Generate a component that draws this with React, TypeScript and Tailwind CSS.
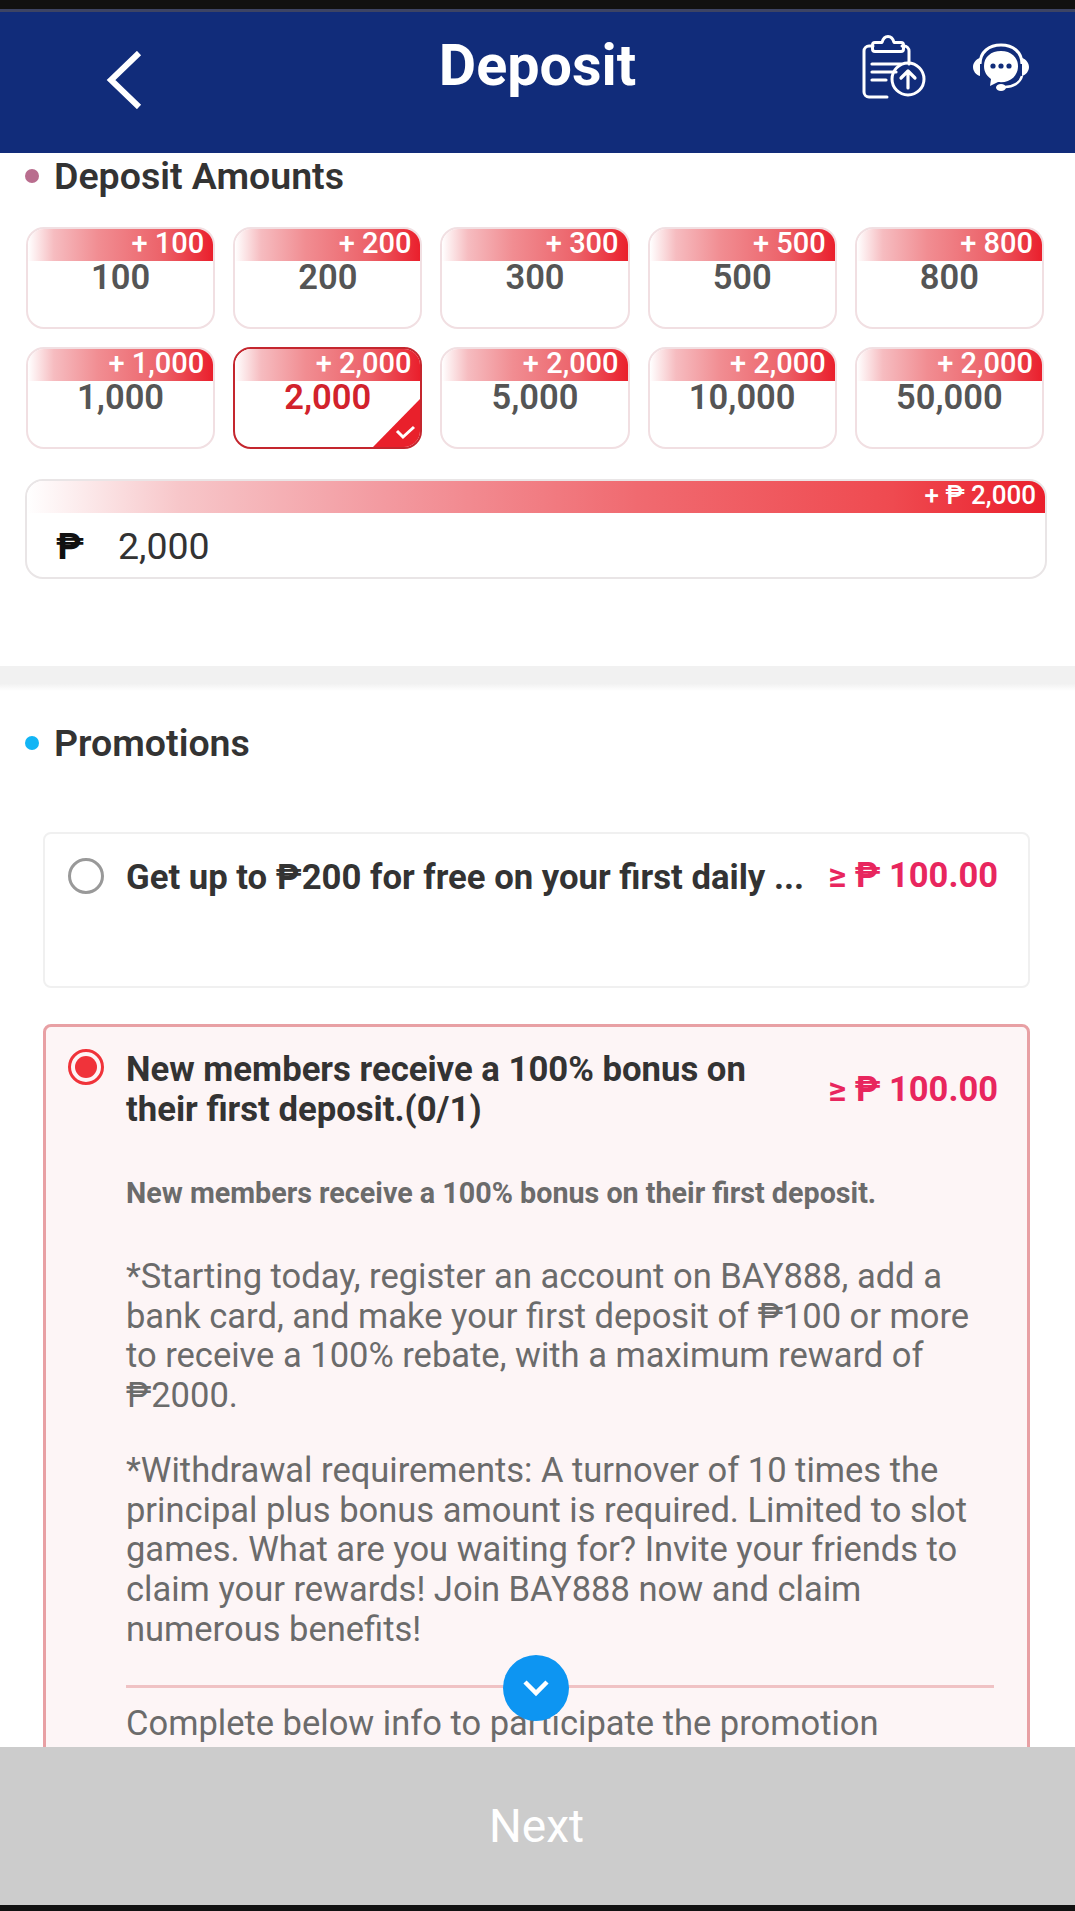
const STRIP = "bg-[linear-gradient(90deg,#ffffff_0%,#f6bcc0_14%,#f18d92_38%,#ec636a_72%,#ea1f2c_100%)]";
const WIDE_STRIP = "bg-[linear-gradient(90deg,#ffffff_0%,#f7c6c9_15%,#f39aa0_35%,#f06a70_60%,#ef4a50_85%,#ea1f2c_100%)]";

const AMOUNTS: [string, string][] = [
  ["100", "+ 100"], ["200", "+ 200"], ["300", "+ 300"], ["500", "+ 500"], ["800", "+ 800"],
  ["1,000", "+ 1,000"], ["2,000", "+ 2,000"], ["5,000", "+ 2,000"], ["10,000", "+ 2,000"], ["50,000", "+ 2,000"],
];

function ClipboardIcon() {
  return (
    <svg width="70" height="66" viewBox="0 0 70 66" fill="none" stroke="#fff" strokeWidth="3" strokeLinecap="round" strokeLinejoin="round">
      <path d="M15 12h-4a5 5 0 0 0-5 5v41a5 5 0 0 0 5 5h18" />
      <path d="M44 12h2a5 5 0 0 1 5 5v13" />
      <path d="M17 8.500h7c1-4 3-6 6-6s5 2 6 6h7c1.500 0 2.500 1 2.500 2.500v4c0 1.500-1 2.500-2.500 2.500h-26c-1.500 0-2.500-1-2.500-2.500v-4c0-1.500 1-2.500 2.500-2.500z" />
      <path d="M14 30h29M14 38h24M14 46h14" strokeWidth="3.200" />
      <circle cx="50" cy="45" r="16" />
      <path d="M50 54V37M43 44l7-7 7 7" strokeWidth="3.200" />
    </svg>
  );
}

function HeadsetIcon() {
  return (
    <svg width="58" height="50" viewBox="0 0 58 50" fill="none">
      <path d="M8 21C8 9 17 2 29 2s21 7 21 19" stroke="#fff" strokeWidth="3" />
      <path d="M8 15c-4 1-7 5-7 9s3 8 7 9z M50 15c4 1 7 5 7 9s-3 8-7 9z" fill="#fff" />
      <path d="M29 8c-10 0-17 6-17 15 0 6 3 10 7 13l-1 7 8-4c1 0 2 .2 3 .2 10 0 17-7 17-16S39 8 29 8z" fill="#fff" />
      <circle cx="21" cy="23" r="2.600" fill="#112c7a" />
      <circle cx="29" cy="23" r="2.600" fill="#112c7a" />
      <circle cx="37" cy="23" r="2.600" fill="#112c7a" />
      <path d="M50 33c-2 7-9 11-17 11" stroke="#fff" strokeWidth="2.500" />
      <ellipse cx="29" cy="44.500" rx="5" ry="3.500" fill="#fff" />
    </svg>
  );
}

function AmountCard({ value, bonus, selected }: { value: string; bonus: string; selected: boolean }) {
  return (
    <div className={`relative h-[102px] overflow-hidden rounded-[18px] border-2 bg-white ${selected ? "border-[#c4262e]" : "border-[#f1dfe2]"}`}>
      <div className={`h-[32px] pr-[9px] text-right text-[29px] leading-[29px] font-medium text-white ${STRIP}`}>{bonus}</div>
      <div className={`text-center text-[34.500px] leading-[33px] font-semibold ${selected ? "text-[#d2222c]" : "text-[#555555]"}`}>{value}</div>
      {selected && (
        <div className="absolute right-0 bottom-0 h-[48px] w-[47px]">
          <svg width="47" height="48" viewBox="0 0 47 48">
            <path d="M0 48L47 0V48z" fill="#e9202b" />
            <path d="M24 32l6 6 11-10" fill="none" stroke="#fff" strokeWidth="3" />
          </svg>
        </div>
      )}
    </div>
  );
}

function Heading({ dot, children }: { dot: string; children: string }) {
  return (
    <div className="flex items-center gap-[15px] pl-[25px]">
      <span className={`h-[14px] w-[14px] rounded-full ${dot}`} />
      <span className="text-[37.500px] leading-[40px] font-semibold text-[#333333]">{children}</span>
    </div>
  );
}

export default function App() {
  return (
    <div className="flex h-[1911px] w-[1075px] flex-col overflow-hidden bg-white font-['Roboto','Liberation_Sans',sans-serif]">
      <div className="h-[9px] shrink-0 bg-[#111111]" />
      <div className="h-[3px] shrink-0 bg-[#3d4464]" />

      <header className="grid h-[141px] shrink-0 grid-cols-[1fr_auto_1fr] bg-[#112c7a] text-white">
        <div className="pt-[39px] pl-[106px]">
          <svg width="36" height="58" viewBox="0 0 36 58" fill="none">
            <path d="M33 2L5 29l28 27" stroke="#fff" strokeWidth="6" />
          </svg>
        </div>
        <h1 className="pt-[23px] text-[57.500px] leading-[62px] font-bold">Deposit</h1>
        <div className="flex items-start justify-end gap-[46px] pt-[22px] pr-[45px]">
          <ClipboardIcon />
          <div className="-ml-[2px] pt-[9px]"><HeadsetIcon /></div>
        </div>
      </header>

      <main className="relative min-h-0 flex-1 overflow-hidden">
        <section className="pt-[3px]">
          <Heading dot="bg-[#b96d8e]">Deposit Amounts</Heading>
          <div className="mt-[31px] grid grid-cols-5 gap-x-[18px] gap-y-[18px] pr-[31px] pl-[26px]">
            {AMOUNTS.map(([v, b], i) => (
              <AmountCard key={i} value={v} bonus={b} selected={i === 6} />
            ))}
          </div>
          <div className="mt-[30px] mr-[28px] ml-[25px] h-[100px] overflow-hidden rounded-[18px] border-2 border-[#e9e5e6]">
            <div className={`h-[32px] pr-[9px] text-right text-[26px] leading-[29px] font-medium text-white ${WIDE_STRIP}`}>+ ₱ 2,000</div>
            <div className="flex items-center pt-[13px] pl-[29px] text-[37.500px] leading-[40px] text-[#333333]">
              <span className="w-[62px] font-bold text-[#111111]">₱</span>
              <span>2,000</span>
            </div>
          </div>
        </section>

        <div className="mt-[87px] h-[25px] bg-[linear-gradient(180deg,#f1f1f1_70%,#ffffff_100%)]" />

        <section className="pt-[32px]">
          <Heading dot="bg-[#12b5f5]">Promotions</Heading>

          <div className="mt-[69px] mr-[45px] ml-[43px] flex h-[156px] items-start rounded-[8px] border-2 border-[#f0f0f0] pt-[23px] pr-[30px] pl-[23px]">
            <span className="mt-[1px] h-[36px] w-[36px] shrink-0 rounded-full border-[3px] border-[#999999]" />
            <span className="ml-[22px] text-[34.700px] leading-[40px] font-bold whitespace-nowrap text-[#333333]">Get up to ₱200 for free on your first daily ...</span>
            <span className="ml-auto text-[34.500px] leading-[36px] font-bold whitespace-nowrap text-[#e8265e]">≥ ₱ 100.00</span>
          </div>

          <div className="mt-[36px] mr-[45px] ml-[43px] h-[800px] rounded-[8px] border-[3px] border-[#e8a0a4] bg-[#fdf5f6] pt-[22px] pr-[29px] pl-[22px]">
            <div className="flex items-center">
              <span className="flex h-[36px] w-[36px] shrink-0 items-center justify-center self-start rounded-full border-[3px] border-[#f0333a]">
                <span className="h-[22px] w-[22px] rounded-full bg-[#f0333a]" />
              </span>
              <span className="ml-[22px] w-[640px] text-[34.700px] leading-[40px] font-bold text-[#333333]">New members receive a 100% bonus on their first deposit.(0/1)</span>
              <span className="ml-auto text-[34.500px] leading-[36px] font-bold whitespace-nowrap text-[#e8265e]">≥ ₱ 100.00</span>
            </div>
            <div className="pl-[58px] text-[#6b6b6b]">
              <p className="mt-[46px] text-[28.700px] leading-[36px] font-bold">New members receive a 100% bonus on their first deposit.</p>
              <p className="mt-[46px] w-[870px] text-[34.500px] leading-[39.700px]">*Starting today, register an account on BAY888, add a bank card, and make your first deposit of ₱100 or more to receive a 100% rebate, with a maximum reward of ₱2000.</p>
              <p className="mt-[35px] w-[870px] text-[34.500px] leading-[39.700px]">*Withdrawal requirements: A turnover of 10 times the principal plus bonus amount is required. Limited to slot games. What are you waiting for? Invite your friends to claim your rewards! Join BAY888 now and claim numerous benefits!</p>
              <div className="mt-[36px] h-[3px] w-[868px] bg-[#f0c2c4]" />
              <p className="mt-[15px] text-[34.500px] leading-[40px] whitespace-nowrap">Complete below info to participate the promotion</p>
            </div>
          </div>
        </section>

        <div className="absolute top-[1502px] left-[503px] flex h-[66px] w-[66px] items-center justify-center rounded-full bg-[#0d95f2]">
          <svg width="30" height="20" viewBox="0 0 30 20" fill="none">
            <path d="M4 4l11 11L26 4" stroke="#fff" strokeWidth="4.500" />
          </svg>
        </div>
      </main>

      <footer className="flex h-[158px] shrink-0 items-center justify-center bg-[#cccccc] pr-[2px] text-[46px] text-white">Next</footer>
      <div className="h-[6px] shrink-0 bg-[#111111]" />
    </div>
  );
}
